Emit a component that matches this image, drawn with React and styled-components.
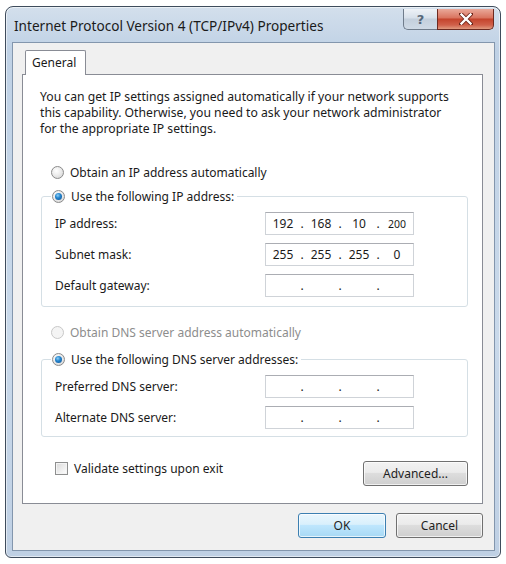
import React from 'react'
import styled, { createGlobalStyle } from 'styled-components'

const GlobalStyle = createGlobalStyle`
    html, body {
        margin: 0;
        padding: 0;
        background: #ffffff;
    }
    body {
        font-family: "Noto Sans", "Open Sans", sans-serif;
        font-size: 12px;
        color: #1a1a1a;
    }
`

const ipRows = [
    { label: 'IP address:', value: ['192', '168', '10', '200'] },
    { label: 'Subnet mask:', value: ['255', '255', '255', '0'] },
    { label: 'Default gateway:', value: null }
]

const dnsRows = [
    { label: 'Preferred DNS server:', value: null },
    { label: 'Alternate DNS server:', value: null }
]

function CloseGlyph() {
    return (
        <svg width="14" height="12" viewBox="0 0 14 12">
            <path d="M2 1 L12 11 M12 1 L2 11" stroke="#6b2418" strokeWidth="4" strokeLinecap="square" />
            <path d="M2.5 1.5 L11.5 10.5 M11.5 1.5 L2.5 10.5" stroke="#ffffff" strokeWidth="2.4" strokeLinecap="square" />
        </svg>
    )
}

function IpField({ value }) {
    const parts = value || ['', '', '', '']
    return (
        <IpBox>
            {parts.map((part, i) => (
                <React.Fragment key={i}>
                    {i > 0 && <Dot>.</Dot>}
                    <Octet $small={part === '200'}>{part}</Octet>
                </React.Fragment>
            ))}
        </IpBox>
    )
}

function renderRow({ label, value }) {
    return (
        <FieldRow key={label}>
            <FieldLabel>{label}</FieldLabel>
            <IpField value={value} />
        </FieldRow>
    )
}

export default function App() {
    return (
        <>
            <GlobalStyle />
            <Window>
                <TitleBar>
                    <Title>Internet Protocol Version 4 (TCP/IPv4) Properties</Title>
                    <CaptionButtons>
                        <HelpButton>?</HelpButton>
                        <CloseButton><CloseGlyph /></CloseButton>
                    </CaptionButtons>
                </TitleBar>
                <Client>
                    <TabStrip>
                        <Tab>General</Tab>
                    </TabStrip>
                    <TabPanel>
                        <Description>
                            You can get IP settings assigned automatically if your network supports<br />
                            this capability. Otherwise, you need to ask your network administrator<br />
                            for the appropriate IP settings.
                        </Description>

                        <RadioRow $top={27}>
                            <Radio />
                            <span>Obtain an IP address automatically</span>
                        </RadioRow>

                        <Group $top={8} $bottom={9}>
                            <Legend>
                                <Radio $checked />
                                <span>Use the following IP address:</span>
                            </Legend>
                            <Rows>{ipRows.map(renderRow)}</Rows>
                        </Group>

                        <RadioRow $top={17} $disabled>
                            <Radio $disabled />
                            <span>Obtain DNS server address automatically</span>
                        </RadioRow>

                        <Group $top={11} $bottom={7}>
                            <Legend>
                                <Radio $checked />
                                <span>Use the following DNS server addresses:</span>
                            </Legend>
                            <Rows>{dnsRows.map(renderRow)}</Rows>
                        </Group>

                        <BottomRow>
                            <CheckLabel>
                                <Checkbox />
                                <span>Validate settings upon exit</span>
                            </CheckLabel>
                            <Button $width={105}>Advanced...</Button>
                        </BottomRow>
                    </TabPanel>
                    <DialogButtons>
                        <Button $width={88} $default>OK</Button>
                        <Button $width={87}>Cancel</Button>
                    </DialogButtons>
                </Client>
            </Window>
        </>
    )
}

const Window = styled.div`
    box-sizing: border-box;
    margin: 6px 0 0 5px;
    width: 496px;
    height: 552px;
    display: flex;
    flex-direction: column;
    border: 1px solid #3f4c5c;
    border-radius: 8px 8px 6px 6px;
    background: linear-gradient(to bottom, #d3dfec 0%, #bfd1e5 8%, #c9d9ea 60%, #bfd0e4 100%);
    box-shadow: inset 0 0 0 1px rgba(255, 255, 255, 0.55);
    overflow: hidden;
`

const TitleBar = styled.div`
    height: 35px;
    display: flex;
    align-items: flex-start;
    padding-left: 8px;
`

const Title = styled.div`
    flex: 1;
    align-self: center;
    font-size: 13.6px;
    color: #1a1a1a;
    padding-top: 1px;
`

const CaptionButtons = styled.div`
    display: flex;
    margin-right: 6px;
    margin-top: 2px;
`

const HelpButton = styled.div`
    width: 34px;
    height: 21px;
    box-sizing: border-box;
    display: flex;
    align-items: center;
    justify-content: center;
    border: 1px solid #6f7c8b;
    border-top: none;
    border-right: none;
    border-radius: 0 0 0 5px;
    background: linear-gradient(to bottom, #eef2f7 0%, #d7e0ea 45%, #c3cfdc 50%, #cfdae6 100%);
    color: #56677a;
    font-family: "DejaVu Sans", sans-serif;
    font-size: 13px;
    font-weight: bold;
`

const CloseButton = styled.div`
    width: 57px;
    height: 21px;
    box-sizing: border-box;
    display: flex;
    align-items: center;
    justify-content: center;
    border: 1px solid #6d2a20;
    border-top: none;
    border-radius: 0 0 5px 0;
    background: linear-gradient(to bottom, #eaa99a 0%, #d9735e 45%, #c4432c 50%, #d0604a 80%, #e09a7f 100%);
`

const Client = styled.div`
    flex: 1;
    display: flex;
    flex-direction: column;
    margin: 0 5px 6px 6px;
    padding: 7px 11px 0 9px;
    border: 1px solid #8396ad;
    background: #f0f0f0;
`

const TabStrip = styled.div`
    display: flex;
    padding-left: 3px;
    position: relative;
    z-index: 1;
`

const Tab = styled.div`
    width: 61px;
    height: 25px;
    box-sizing: border-box;
    padding: 3px 0 0 6px;
    margin-bottom: -1px;
    border: 1px solid #898c95;
    border-bottom: none;
    border-radius: 2px 2px 0 0;
    background: #ffffff;
    font-size: 12px;
`

const TabPanel = styled.div`
    display: flex;
    flex-direction: column;
    padding: 0 14px 17px 17px;
    border: 1px solid #898c95;
    background: #ffffff;
`

const Description = styled.p`
    margin: 14px 0 0 0;
    line-height: 16px;
    font-size: 12.2px;
    white-space: nowrap;
`

const RadioRow = styled.div`
    display: flex;
    align-items: center;
    gap: 6px;
    height: 16px;
    margin: ${p => p.$top}px 0 0 11px;
    color: ${p => (p.$disabled ? '#8d8d8d' : 'inherit')};
`

const Radio = styled.span`
    position: relative;
    width: 13px;
    height: 13px;
    box-sizing: border-box;
    border-radius: 50%;
    border: 1px solid ${p => (p.$disabled ? '#c8c8c8' : '#8b8b8b')};
    background: ${p => (p.$disabled ? '#f4f4f4' : 'radial-gradient(circle at 40% 35%, #ffffff 0%, #ececec 45%, #cfcfcf 100%)')};
    flex-shrink: 0;

    &::after {
        content: '';
        display: ${p => (p.$checked ? 'block' : 'none')};
        position: absolute;
        left: 2px;
        top: 2px;
        width: 7px;
        height: 7px;
        border-radius: 50%;
        background: radial-gradient(circle at 40% 35%, #8fd0f7 0%, #2586cf 40%, #0f4f8f 100%);
    }
`

const Group = styled.fieldset`
    margin: ${p => p.$top}px 0 0 1px;
    padding: 8px 0 ${p => p.$bottom}px 13px;
    border: 1px solid #d5dfe5;
    border-radius: 3px;
    min-width: 0;
`

const Legend = styled.legend`
    display: flex;
    align-items: center;
    gap: 6px;
    height: 16px;
    padding: 0 3px 0 1px;
    margin-left: -4px;
`

const Rows = styled.div`
    display: flex;
    flex-direction: column;
    gap: 8px;
`

const FieldRow = styled.div`
    display: flex;
    align-items: center;
    height: 23px;
    padding-right: 53px;
`

const FieldLabel = styled.span`
    flex: 1;
`

const IpBox = styled.div`
    width: 149px;
    height: 23px;
    box-sizing: border-box;
    display: flex;
    align-items: center;
    padding-left: 2px;
    border: 1px solid #cfd3d8;
    border-top-color: #abadb3;
    background: #ffffff;
`

const Octet = styled.span`
    width: 30px;
    text-align: center;
    font-size: ${p => (p.$small ? '10.5px' : '12px')};
`

const Dot = styled.span`
    width: 8px;
    text-align: center;
`

const BottomRow = styled.div`
    display: flex;
    align-items: center;
    justify-content: space-between;
    margin-top: 24px;
`

const CheckLabel = styled.label`
    display: flex;
    align-items: center;
    gap: 6px;
    margin-left: 15px;
    margin-top: -11px;
`

const Checkbox = styled.span`
    width: 13px;
    height: 13px;
    box-sizing: border-box;
    border: 1px solid #8e8f8f;
    background: linear-gradient(135deg, #d9d9d9 0%, #f0f0f0 60%, #ffffff 100%);
    box-shadow: inset 0 0 0 1px #f4f4f4;
`

const Button = styled.button`
    width: ${p => p.$width}px;
    height: 25px;
    box-sizing: border-box;
    font-family: inherit;
    font-size: 12px;
    color: #1f1f1f;
    border-radius: 3px;
    border: 1px solid ${p => (p.$default ? '#3c7fb1' : '#707070')};
    background: ${p => (p.$default
        ? 'linear-gradient(to bottom, #eaf6fd 0%, #d9f0fc 45%, #bee6fd 50%, #a7d9f5 100%)'
        : 'linear-gradient(to bottom, #f2f2f2 0%, #ebebeb 45%, #dddddd 50%, #cfcfcf 100%)')};
    box-shadow: inset 0 0 0 1px rgba(255, 255, 255, 0.7);
    padding: 0;
`

const DialogButtons = styled.div`
    display: flex;
    justify-content: flex-end;
    gap: 10px;
    margin-top: 9px;
`
